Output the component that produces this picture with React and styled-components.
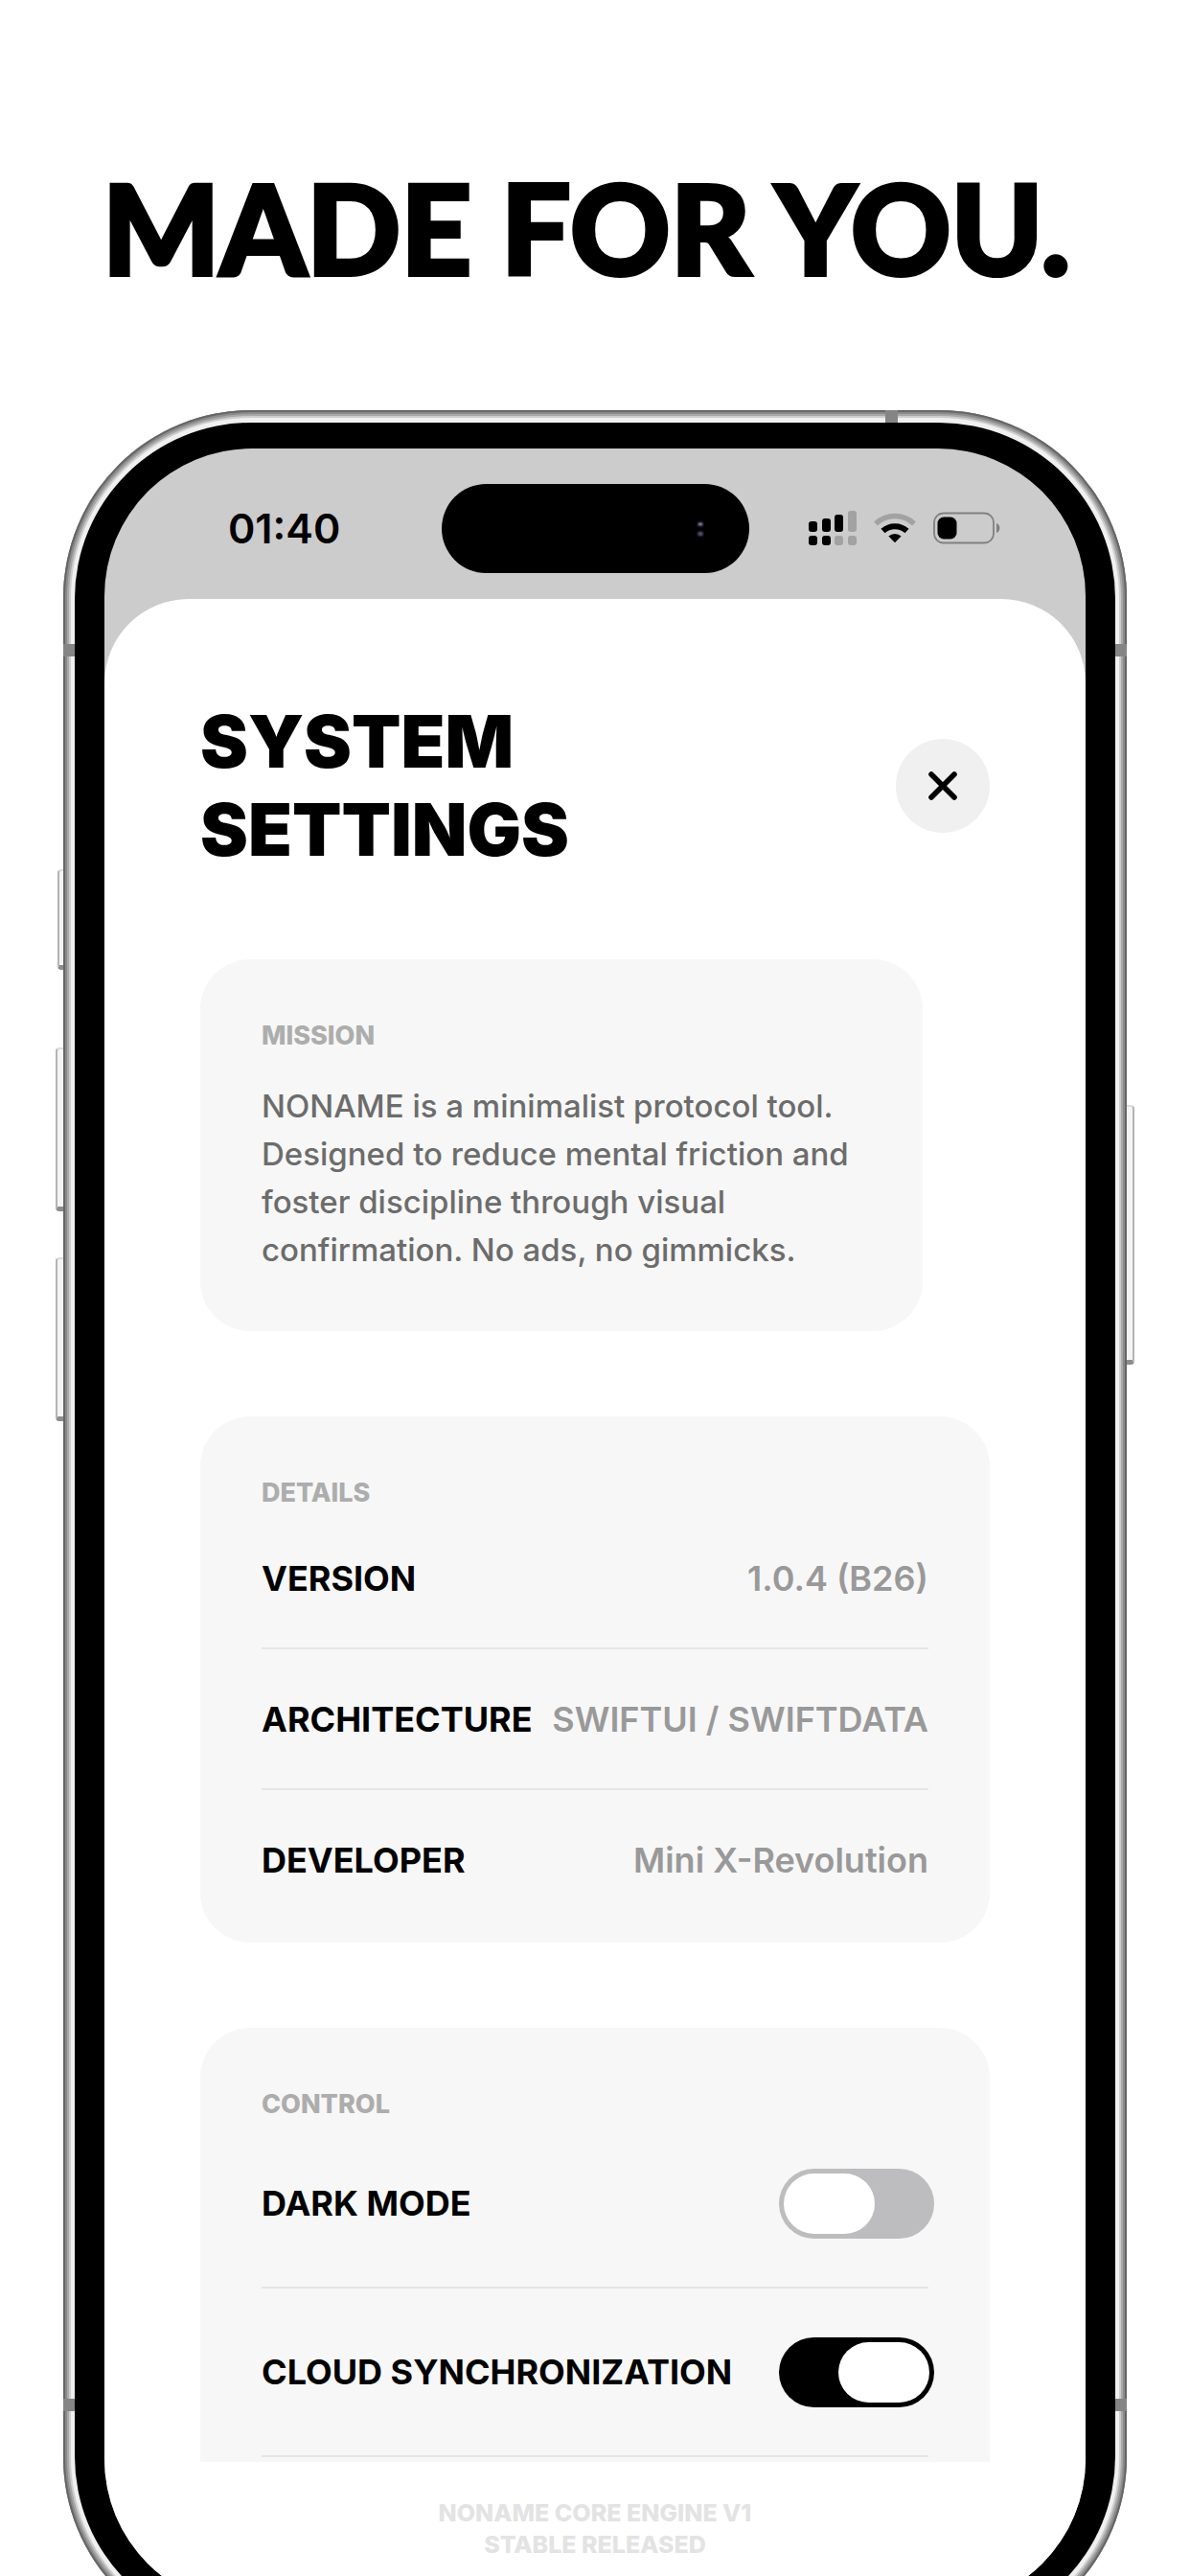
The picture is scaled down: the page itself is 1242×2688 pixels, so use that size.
import React, { useState } from "react";
import styled, { createGlobalStyle } from "styled-components";

const FONT = "Inter, 'Liberation Sans', sans-serif";

const DETAILS = [
	{ name: "VERSION", value: "1.0.4 (B26)" },
	{ name: "ARCHITECTURE", value: "SWIFTUI / SWIFTDATA" },
	{ name: "DEVELOPER", value: "Mini X-Revolution" },
];

const CONTROLS = [
	{ id: "dark-mode", name: "DARK MODE" },
	{ id: "cloud-sync", name: "CLOUD SYNCHRONIZATION" },
];

function SignalIcon() {
	return (
		<svg width="50" height="36" viewBox="0 0 50 36" aria-hidden="true">
			<g fill="#000">
				<rect x="0" y="11" width="9" height="11" rx="3" />
				<rect x="14" y="8" width="9" height="14" rx="3" />
				<rect x="27" y="4" width="9" height="18" rx="3" />
				<rect x="0" y="26" width="9" height="10" rx="3" />
				<rect x="14" y="26" width="9" height="10" rx="3" />
			</g>
			<g fill="#a2a2a2">
				<rect x="41" y="0" width="9" height="22" rx="3" />
				<rect x="27" y="26" width="9" height="10" rx="3" />
				<rect x="41" y="26" width="9" height="10" rx="3" />
			</g>
		</svg>
	);
}

function WifiIcon() {
	return (
		<svg width="44" height="32" viewBox="0 0 44 32" aria-hidden="true">
			<path d="M2 11.5A29 29 0 0 1 42 11.5" fill="none" stroke="#a2a2a2" strokeWidth="5.4" />
			<path d="M9.5 19A18.5 18.5 0 0 1 34.5 19" fill="none" stroke="#000" strokeWidth="6" />
			<path d="M15.4 24.6a9.6 9.6 0 0 1 13.2 0L22 31.2z" fill="#000" />
		</svg>
	);
}

function BatteryIcon() {
	return (
		<svg width="70" height="34" viewBox="0 0 70 34" aria-hidden="true">
			<rect x="1" y="1.5" width="62" height="31" rx="9.5" fill="none" stroke="#808080" strokeWidth="1.8" />
			<rect x="4.5" y="5.5" width="20" height="23" rx="6.5" fill="#000" />
			<path d="M66 12c4.6 1.8 4.6 8.2 0 10z" fill="#808080" />
		</svg>
	);
}

function CameraDots() {
	return (
		<svg width="16" height="26" viewBox="0 0 16 26" aria-hidden="true">
			<ellipse cx="8" cy="8" rx="4" ry="3.5" fill="#15152a" />
			<ellipse cx="8" cy="18" rx="4" ry="3.5" fill="#15152a" />
			<ellipse cx="8" cy="8" rx="2.5" ry="1.8" fill="#6a6a72" />
			<ellipse cx="8" cy="18" rx="2.5" ry="2" fill="#4a4a54" />
		</svg>
	);
}

function CloseIcon() {
	return (
		<svg width="30" height="30" viewBox="0 0 30 30" aria-hidden="true">
			<path d="M3 3l24 24M27 3L3 27" stroke="#000" strokeWidth="5.6" strokeLinecap="round" />
		</svg>
	);
}

function App() {
	const [switches, setSwitches] = useState({ "dark-mode": false, "cloud-sync": true });

	return (
		<Page>
			<GlobalStyle />
			<Headline>MADE FOR YOU.</Headline>
			<Phone>
				<SideButton $side="left" $top={479} $height={105} $depth={6} />
				<SideButton $side="left" $top={665} $height={171} $depth={8} />
				<SideButton $side="left" $top={884} $height={171} $depth={8} />
				<SideButton $side="right" $top={725} $height={271} $depth={8} />
				<Frame>
					<Bezel>
						<Screen>
							<StatusBar>
								<Time>01:40</Time>
								<Island><CameraDots /></Island>
								<StatusIcons>
									<SignalIcon />
									<WifiIcon />
									<BatteryIcon />
								</StatusIcons>
							</StatusBar>
							<Sheet>
								<Scroll>
									<Header>
										<Title>SYSTEM<br />SETTINGS</Title>
										<CloseButton type="button" aria-label="Close">
											<CloseIcon />
										</CloseButton>
									</Header>

									<MissionCard>
										<SectionLabel>MISSION</SectionLabel>
										<Mission>
											NONAME is a minimalist protocol tool. Designed to reduce mental
											friction and foster discipline through visual confirmation. No ads,
											no gimmicks.
										</Mission>
									</MissionCard>

									<Card>
										<SectionLabel>DETAILS</SectionLabel>
										<DetailList>
											{DETAILS.map((item) => (
												<DetailRow key={item.name}>
													<dt>{item.name}</dt>
													<DetailValue>{item.value}</DetailValue>
												</DetailRow>
											))}
										</DetailList>
									</Card>

									<ControlCard>
										<SectionLabel>CONTROL</SectionLabel>
										{CONTROLS.map((item) => (
											<ControlRow key={item.id}>
												<label htmlFor={item.id}>{item.name}</label>
												<Toggle
													id={item.id}
													type="checkbox"
													role="switch"
													checked={switches[item.id]}
													onChange={(e) => setSwitches({ ...switches, [item.id]: e.target.checked })}
												/>
											</ControlRow>
										))}
									</ControlCard>
								</Scroll>
								<Footer>NONAME CORE ENGINE V1<br />STABLE RELEASED</Footer>
							</Sheet>
						</Screen>
					</Bezel>
					<Antenna $edge="left" $end="top" />
					<Antenna $edge="right" $end="top" />
					<Antenna $edge="left" $end="bottom" />
					<Antenna $edge="right" $end="bottom" />
					<TopAntenna />
				</Frame>
			</Phone>
		</Page>
	);
}

const GlobalStyle = createGlobalStyle`
	* {
		box-sizing: border-box;
	}
	body {
		margin: 0;
		background: #fff;
	}
`;

const Page = styled.main`
	height: 100vh;
	overflow: hidden;
	padding: 168px 66px 0;
	background: #fff;
	color: #000;
	font-family: ${FONT};
`;

const Headline = styled.h1`
	margin: 0 0 120px;
	padding-right: 18px;
	font-family: Lato, ${FONT};
	font-size: 129px;
	font-weight: 900;
	line-height: 138px;
	padding-bottom: 2px;
	text-align: center;
	white-space: nowrap;
	-webkit-text-stroke: 4px #000;
`;

const Phone = styled.div`
	position: relative;
	aspect-ratio: 1110 / 2332;
`;

const Frame = styled.div`
	position: relative;
	height: 100%;
	padding: 13px 12px;
	border-radius: 196px;
	background: #f0f0f0;
	box-shadow:
		inset 0 0 0 2px #666,
		inset 0 0 0 4px #8a8a8a,
		inset 0 0 0 6px #a8a8a8,
		inset 0 0 0 8px #cdcdcd;
`;

const Bezel = styled.div`
	height: 100%;
	padding: 27px 31px;
	border-radius: 184px;
	background: #000;
`;

const Screen = styled.div`
	display: flex;
	flex-direction: column;
	height: 100%;
	overflow: hidden;
	border-radius: 154px;
	background: #ccc;
`;

const SideButton = styled.span`
	position: absolute;
	${(props) => props.$side}: -${(props) => props.$depth}px;
	top: ${(props) => props.$top}px;
	width: 12px;
	height: ${(props) => props.$height}px;
	border: 2px solid #b4b4b4;
	border-top-color: #ddd;
	border-bottom: 5px solid #8c8c8c;
	border-radius: 4px;
	background: #f4f4f4;
`;

const Antenna = styled.span`
	position: absolute;
	${(props) => props.$edge}: 0;
	${(props) => props.$end}: 244px;
	width: 12px;
	height: 13px;
	background: #858585;
`;

const TopAntenna = styled.span`
	position: absolute;
	top: 0;
	right: 239px;
	width: 13px;
	height: 13px;
	background: #858585;
`;

const StatusBar = styled.div`
	display: grid;
	grid-template-columns: 1fr auto 1fr;
	align-items: center;
	padding: 37px 0 27px;
`;

const Time = styled.span`
	padding: 0 0 2px 129px;
	font-size: 43px;
	font-weight: 600;
	line-height: 48px;
`;

const Island = styled.div`
	display: flex;
	align-items: center;
	justify-content: flex-end;
	width: 321px;
	height: 93px;
	padding-right: 43px;
	border-radius: 48px;
	background: #000;
`;

const StatusIcons = styled.div`
	display: flex;
	align-items: center;
	justify-content: flex-end;
	gap: 18px;
	padding: 0 89px 2px 0;
`;

const Sheet = styled.div`
	display: flex;
	flex-direction: column;
	flex: 1;
	min-height: 0;
	overflow: hidden;
	border-radius: 88px 88px 0 0;
	background: #fff;
`;

const Scroll = styled.div`
	display: flex;
	flex-direction: column;
	flex: 1;
	gap: 89px;
	min-height: 0;
	overflow: hidden;
	padding: 103px 100px 0;
`;

const Header = styled.header`
	display: flex;
	align-items: center;
	justify-content: space-between;
`;

const Title = styled.h2`
	margin: 0;
	font-size: 75px;
	font-weight: 900;
	line-height: 92px;
`;

const CloseButton = styled.button`
	display: flex;
	align-items: center;
	justify-content: center;
	width: 98px;
	height: 98px;
	padding: 0;
	border: 0;
	border-radius: 50%;
	background: #f0f0f0;
`;

const Card = styled.section`
	flex-shrink: 0;
	padding: 64px 64px 14px;
	border-radius: 52px;
	background: #f7f7f7;
`;

const MissionCard = styled(Card)`
	margin-right: 70px;
	padding-bottom: 60px;
`;

const ControlCard = styled(Card)`
	padding-bottom: 64px;
`;

const SectionLabel = styled.h3`
	margin: 0;
	color: #adadad;
	font-size: 27px;
	font-weight: 800;
	line-height: 32px;
`;

const Mission = styled.p`
	margin: 32px 0 0;
	color: #6c6c6c;
	font-size: 33px;
	font-weight: 500;
	line-height: 50px;
`;

const Row = styled.div`
	display: flex;
	align-items: center;
	justify-content: space-between;
	border-bottom: 2px solid #e5e5e5;
	font-size: 36px;
	font-weight: 700;
	line-height: 44px;
	white-space: nowrap;
`;

const DetailList = styled.dl`
	margin: 0;
`;

const DetailRow = styled(Row)`
	height: 147px;

	&:last-child {
		height: 145px;
		border-bottom: 0;
	}
`;

const DetailValue = styled.dd`
	margin: 0;
	color: #999;
	font-weight: 600;
`;

const ControlRow = styled(Row)`
	height: 176px;
`;

const Toggle = styled.input`
	appearance: none;
	display: flex;
	width: 162px;
	height: 73px;
	margin: 0 -6px 0 0;
	padding: 5px;
	border-radius: 37px;
	background: #bdbdbf;

	&::before {
		content: "";
		width: 95px;
		border-radius: 32px;
		background: #fff;
	}

	&:checked {
		justify-content: flex-end;
		background: #000;
	}
`;

const Footer = styled.footer`
	padding: 37px 0 48px;
	color: #e3e3e3;
	font-size: 25px;
	font-weight: 800;
	line-height: 33px;
	text-align: center;
`;

export default App;
